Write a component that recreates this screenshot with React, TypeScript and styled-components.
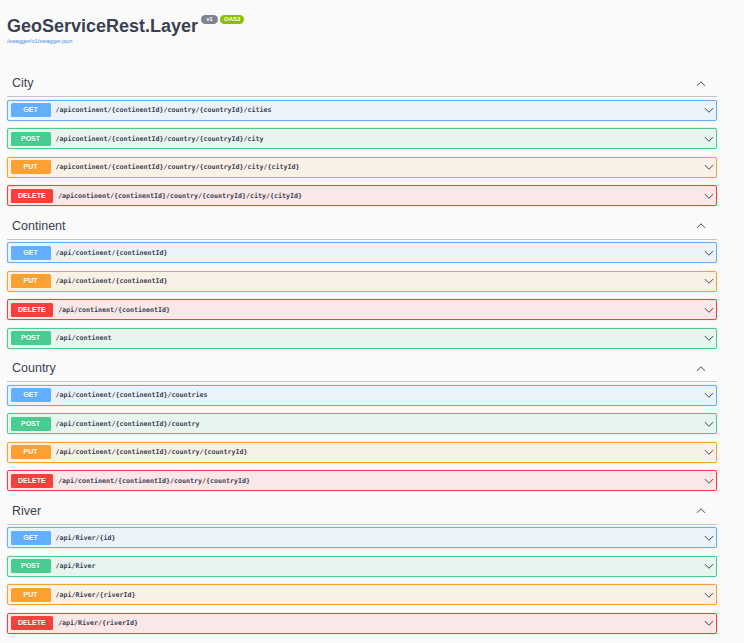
import React from "react";
import styled, { createGlobalStyle } from "styled-components";

type Method = "GET" | "POST" | "PUT" | "DELETE";

const palette: Record<Method, { main: string; bg: string }> = {
  GET: { main: "#61affe", bg: "#ebf3fa" },
  POST: { main: "#49cc90", bg: "#e8f5ef" },
  PUT: { main: "#fca130", bg: "#faf1e6" },
  DELETE: { main: "#f93e3e", bg: "#fae7e7" },
};

const sections: { tag: string; ops: [Method, string][] }[] = [
  {
    tag: "City",
    ops: [
      ["GET", "/apicontinent/{continentId}/country/{countryId}/cities"],
      ["POST", "/apicontinent/{continentId}/country/{countryId}/city"],
      ["PUT", "/apicontinent/{continentId}/country/{countryId}/city/{cityId}"],
      ["DELETE", "/apicontinent/{continentId}/country/{countryId}/city/{cityId}"],
    ],
  },
  {
    tag: "Continent",
    ops: [
      ["GET", "/api/continent/{continentId}"],
      ["PUT", "/api/continent/{continentId}"],
      ["DELETE", "/api/continent/{continentId}"],
      ["POST", "/api/continent"],
    ],
  },
  {
    tag: "Country",
    ops: [
      ["GET", "/api/continent/{continentId}/countries"],
      ["POST", "/api/continent/{continentId}/country"],
      ["PUT", "/api/continent/{continentId}/country/{countryId}"],
      ["DELETE", "/api/continent/{continentId}/country/{countryId}"],
    ],
  },
  {
    tag: "River",
    ops: [
      ["GET", "/api/River/{id}"],
      ["POST", "/api/River"],
      ["PUT", "/api/River/{riverId}"],
      ["DELETE", "/api/River/{riverId}"],
    ],
  },
];

const GlobalStyle = createGlobalStyle`
  html, body {
    margin: 0;
    padding: 0;
    background: #fafafa;
    font-family: "Liberation Sans", Arial, sans-serif;
    color: #3b4151;
  }
`;

const Page = styled.div`
  margin: 0 27px 0 7px;
`;

const Info = styled.header`
  padding-top: 14.5px;
  margin-bottom: 26.5px;
`;

const TitleRow = styled.div`
  display: flex;
  align-items: flex-start;
`;

const Title = styled.h1`
  margin: 0;
  font-size: 18px;
  line-height: 22px;
  font-weight: 700;
  color: #3b4151;
`;

const Pill = styled.span<{ $bg: string }>`
  display: inline-block;
  margin-top: 0.5px;
  margin-left: ${(p) => (p.$bg === "#7d8492" ? "3px" : "2px")};
  min-width: 17px;
  box-sizing: border-box;
  padding: 0 4px;
  height: 9px;
  line-height: 9px;
  border-radius: 5px;
  background: ${(p) => p.$bg};
  color: #fff;
  font-size: 6px;
  font-weight: 700;
  text-align: center;
`;

const SpecLink = styled.a`
  display: block;
  margin-top: 1px;
  font-size: 5.7px;
  line-height: 7px;
  color: #4990e2;
  text-decoration: none;
`;

const Section = styled.section``;

const TagHeader = styled.div`
  display: flex;
  align-items: center;
  justify-content: space-between;
  padding: 5px 11px 5px 5px;
  border-bottom: 1px solid #c1c3c7;
  margin-bottom: 2.5px;
`;

const TagName = styled.h3`
  margin: 0;
  font-size: 12.5px;
  line-height: 15px;
  font-weight: 400;
  color: #3b4151;
`;

const Row = styled.div<{ $m: Method }>`
  display: flex;
  align-items: center;
  height: 21px;
  box-sizing: border-box;
  padding: 2.5px;
  margin-bottom: 7.5px;
  border: 1px solid ${(p) => palette[p.$m].main};
  border-radius: 2px;
  background: ${(p) => palette[p.$m].bg};
  box-shadow: 0 0 1.5px rgba(0, 0, 0, 0.19);
`;

const Badge = styled.span<{ $m: Method }>`
  min-width: 40px;
  box-sizing: border-box;
  padding: 3px 7.5px;
  height: 14px;
  line-height: 8px;
  border-radius: 1.5px;
  background: ${(p) => palette[p.$m].main};
  color: #fff;
  font-size: 7px;
  font-weight: 700;
  text-align: center;
  text-shadow: 0 0.5px 0 rgba(0, 0, 0, 0.1);
`;

const Path = styled.span`
  flex: 1;
  padding: 0 5px;
  font-family: "DejaVu Sans Mono", "Liberation Mono", monospace;
  font-size: 6.65px;
  font-weight: 700;
  color: #3b4151;
  white-space: nowrap;
`;

const ArrowBox = styled.svg<{ $up?: boolean; $color: string }>`
  width: 10px;
  height: 10px;
  flex: none;
  fill: ${(p) => p.$color};
  transform: ${(p) => (p.$up ? "rotate(180deg)" : "none")};
`;

const Arrow = ({ up, color }: { up?: boolean; color: string }) => (
  <ArrowBox viewBox="0 0 20 20" $up={up} $color={color}>
    <path d="M17.418 6.109c.272-.268.709-.268.979 0s.271.701 0 .969l-7.908 7.83c-.27.268-.707.268-.979 0l-7.908-7.83c-.27-.268-.27-.701 0-.969.271-.268.709-.268.979 0L10 13.25l7.418-7.141z" />
  </ArrowBox>
);

export default function App() {
  return (
    <>
      <GlobalStyle />
      <Page>
        <Info>
          <TitleRow>
            <Title>GeoServiceRest.Layer</Title>
            <Pill $bg="#7d8492">v1</Pill>
            <Pill $bg="#89bf04">OAS3</Pill>
          </TitleRow>
          <SpecLink href="#">/swagger/v1/swagger.json</SpecLink>
        </Info>
        {sections.map((s) => (
          <Section key={s.tag}>
            <TagHeader>
              <TagName>{s.tag}</TagName>
              <Arrow up color="#555a66" />
            </TagHeader>
            {s.ops.map(([m, p], i) => (
              <Row key={i} $m={m}>
                <Badge $m={m}>{m}</Badge>
                <Path>{p}</Path>
                <Arrow color="#3b4151" />
              </Row>
            ))}
          </Section>
        ))}
      </Page>
    </>
  );
}
